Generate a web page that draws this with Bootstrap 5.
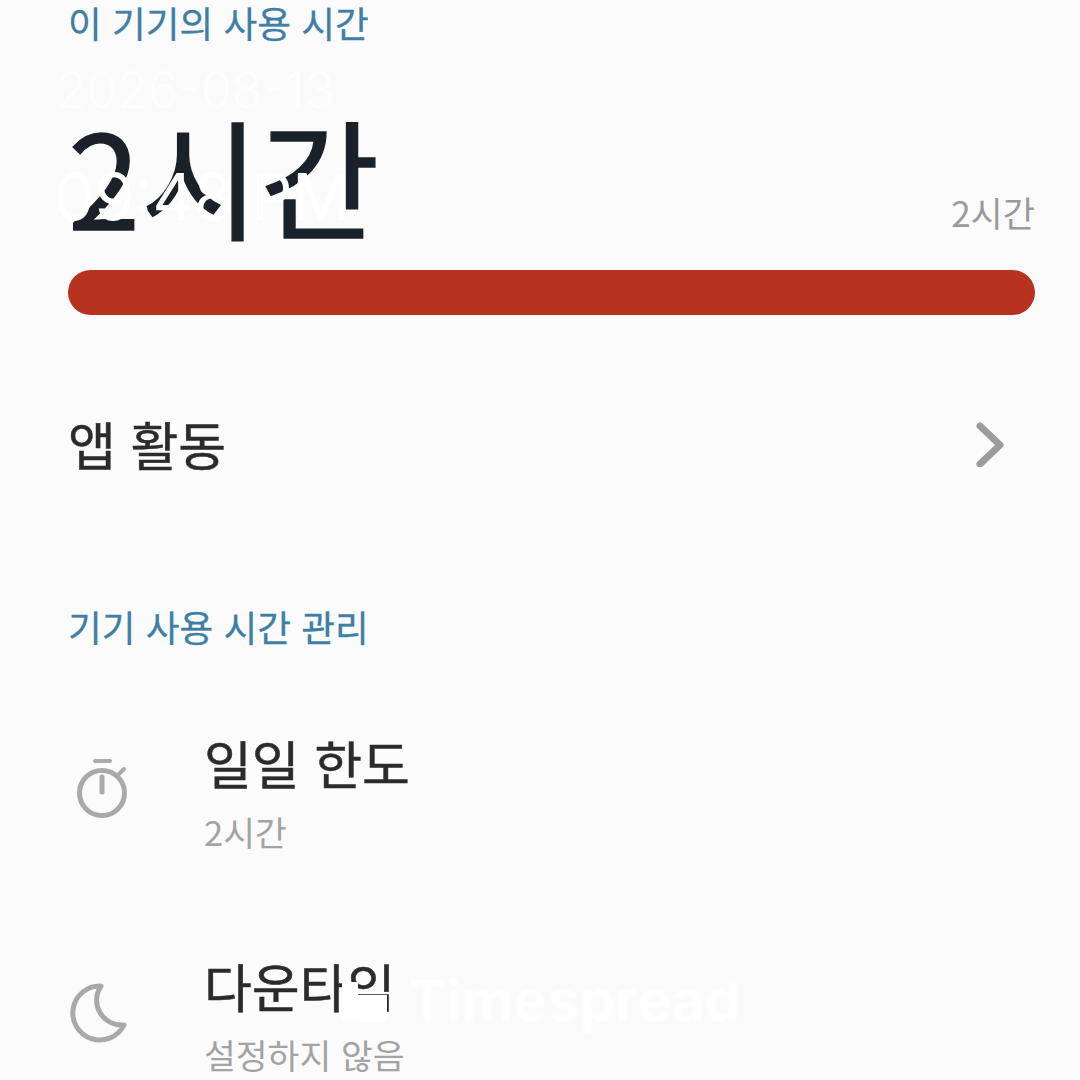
<!DOCTYPE html>
<html lang="ko">
<head>
<meta charset="utf-8">
<title>기기 사용 시간</title>
<link rel="stylesheet" href="https://cdn.jsdelivr.net/npm/bootstrap@5.3.0/dist/css/bootstrap.min.css">
<style>
html,body{height:100%;overflow:hidden}
body{background:#fbfbfb;font-family:"Noto Sans CJK KR","Noto Sans",sans-serif;width:1080px;height:1080px}
.screen{position:relative;width:1080px;height:1080px;overflow:hidden;padding:0 45px 0 68px}
.sect-title{color:#3f7fa6;font-size:36.7px;line-height:44px;margin:0;font-weight:400;-webkit-text-stroke:.3px #3f7fa6}
.big-row{height:210px}
.big-value{font-size:130px;line-height:150px;color:#1a2129;font-weight:400;-webkit-text-stroke:1.5px #1a2129;margin-bottom:6px}
.side-value{font-size:35px;line-height:44px;color:#9a9a9a;margin-bottom:20px}
.usage-bar{height:45px;background:#b83220;border-radius:23px}
.activity-row{height:60px;margin-top:99px;padding-right:30px}
.activity-label{font-size:52px;line-height:60px;color:#2b2b2b;font-weight:400;-webkit-text-stroke:.5px #2b2b2b}
.manage-title{margin-top:130px}
.item-row{height:123px}
.first-item{margin-top:80px}
.next-item{margin-top:100px}
.item-icon{width:136px;flex:none}
.item-text{padding-top:5px}
.item-name{font-size:52px;line-height:62px;color:#2b2b2b;font-weight:400;-webkit-text-stroke:.5px #2b2b2b}
.item-sub{font-size:34.6px;line-height:44px;color:#a3a3a3;margin-top:15px}
.wm-date,.wm-time,.wm-brand,.wm-logo{position:absolute;color:#fff;font-family:Inter,"Liberation Sans",sans-serif;white-space:nowrap}
.wm-date{left:56px;top:61px;font-size:50px;line-height:58px;opacity:.8;font-weight:300}
.wm-time{left:54px;top:157px;font-size:64px;line-height:80px;font-weight:400}
.wm-brand{left:408px;top:968px;font-size:57px;line-height:66px;font-weight:700;opacity:.9}
.wm-logo{left:342px;top:980px}
</style>
</head>
<body>
<main class="screen">
  <h2 class="sect-title">이 기기의 사용 시간</h2>
  <div class="big-row d-flex justify-content-between align-items-end">
    <div class="big-value">2시간</div>
    <div class="side-value">2시간</div>
  </div>
  <div class="usage-bar mt-3"></div>
  <div class="activity-row d-flex justify-content-between align-items-center">
    <div class="activity-label">앱 활동</div>
    <svg width="30" height="46" viewBox="0 0 30 46" fill="none" stroke="#9c9c9c" stroke-width="7" stroke-linecap="round" stroke-linejoin="round"><path d="M5 5 L25 24 L5 43"/></svg>
  </div>
  <h2 class="sect-title manage-title">기기 사용 시간 관리</h2>
  <div class="item-row first-item d-flex align-items-center">
    <div class="item-icon">
      <svg width="60" height="64" viewBox="0 0 60 64" fill="none" stroke="#a9a9a9" stroke-width="5" stroke-linecap="round"><path d="M27 3H42" stroke-width="4"/><circle cx="34" cy="35" r="22.5"/><path d="M34 19V34"/><path d="M51 16l5-5" stroke-width="4"/></svg>
    </div>
    <div class="item-text">
      <div class="item-name">일일 한도</div>
      <div class="item-sub">2시간</div>
    </div>
  </div>
  <div class="item-row next-item d-flex align-items-center">
    <div class="item-icon">
      <svg width="60" height="60" viewBox="0 0 60 60" fill="none" stroke="#a9a9a9" stroke-width="5" stroke-linejoin="round"><path d="M33 3A27 27 0 1 0 56 42A25 25 0 0 1 33 3Z"/></svg>
    </div>
    <div class="item-text">
      <div class="item-name">다운타임</div>
      <div class="item-sub">설정하지 않음</div>
    </div>
  </div>
  <div class="wm-date">2026-08-13</div>
  <div class="wm-time">09:48 PM</div>
  <svg class="wm-logo" width="48" height="42" viewBox="0 0 48 42" fill="#fff"><path d="M0 2H16V41H0Z"/><path d="M16 15H45V42H16Z"/></svg>
  <div class="wm-brand">Timespread</div>
</main>
<script src="https://cdn.jsdelivr.net/npm/bootstrap@5.3.0/dist/js/bootstrap.bundle.min.js"></script>
</body>
</html>
